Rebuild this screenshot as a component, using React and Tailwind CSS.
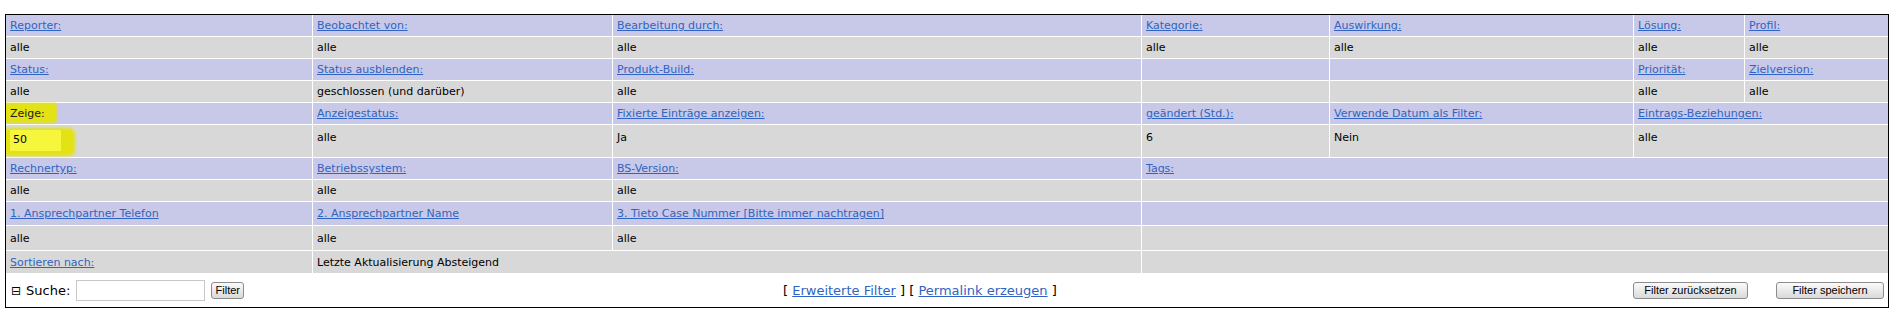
const PURPLE = "bg-[#c8c8e8]";
const GRAY = "bg-[#d8d8d8]";

function L({ children }) {
  return (
    <a href="#" className="text-[#2f64c2] underline">
      {children}
    </a>
  );
}

function Cell({ bg, span = 1, top = false, children }) {
  return (
    <td
      colSpan={span}
      className={`${bg} px-[4px] whitespace-nowrap overflow-hidden ${top ? "align-top pt-[5px]" : "align-middle pt-[2px] pb-0"}`}
    >
      {children}
    </td>
  );
}

function Btn({ children, className = "" }) {
  return (
    <button
      className={`h-[17px] rounded-[3px] border border-[#8c8c8c] bg-gradient-to-b from-[#fbfbfb] to-[#d9d9d9] text-[11px] leading-none text-black font-['Liberation_Sans',Arial,sans-serif] ${className}`}
    >
      {children}
    </button>
  );
}

export default function App() {
  return (
    <div className="min-h-screen bg-white pl-[5px] pt-[14px] font-['DejaVu_Sans',Verdana,sans-serif] text-[11px] text-black">
      <div className="w-[1884px] border border-black overflow-hidden">
        <table className="-m-px w-[1884px] table-fixed border-separate border-spacing-[1px] bg-white">
          <colgroup>
            <col className="w-[306px]" />
            <col className="w-[299px]" />
            <col className="w-[528px]" />
            <col className="w-[187px]" />
            <col className="w-[303px]" />
            <col className="w-[110px]" />
            <col className="w-[143px]" />
          </colgroup>
          <tbody>
            <tr className="h-[21px]">
              <Cell bg={PURPLE}><L>Reporter:</L></Cell>
              <Cell bg={PURPLE}><L>Beobachtet von:</L></Cell>
              <Cell bg={PURPLE}><L>Bearbeitung durch:</L></Cell>
              <Cell bg={PURPLE}><L>Kategorie:</L></Cell>
              <Cell bg={PURPLE}><L>Auswirkung:</L></Cell>
              <Cell bg={PURPLE}><L>Lösung:</L></Cell>
              <Cell bg={PURPLE}><L>Profil:</L></Cell>
            </tr>
            <tr className="h-[21px]">
              <Cell bg={GRAY}>alle</Cell>
              <Cell bg={GRAY}>alle</Cell>
              <Cell bg={GRAY}>alle</Cell>
              <Cell bg={GRAY}>alle</Cell>
              <Cell bg={GRAY}>alle</Cell>
              <Cell bg={GRAY}>alle</Cell>
              <Cell bg={GRAY}>alle</Cell>
            </tr>
            <tr className="h-[21px]">
              <Cell bg={PURPLE}><L>Status:</L></Cell>
              <Cell bg={PURPLE}><L>Status ausblenden:</L></Cell>
              <Cell bg={PURPLE}><L>Produkt-Build:</L></Cell>
              <Cell bg={PURPLE} />
              <Cell bg={PURPLE} />
              <Cell bg={PURPLE}><L>Priorität:</L></Cell>
              <Cell bg={PURPLE}><L>Zielversion:</L></Cell>
            </tr>
            <tr className="h-[21px]">
              <Cell bg={GRAY}>alle</Cell>
              <Cell bg={GRAY}>geschlossen (und darüber)</Cell>
              <Cell bg={GRAY}>alle</Cell>
              <Cell bg={GRAY} />
              <Cell bg={GRAY} />
              <Cell bg={GRAY}>alle</Cell>
              <Cell bg={GRAY}>alle</Cell>
            </tr>
            <tr className="h-[21px]">
              <td className={`${PURPLE} relative px-[4px] pt-[2px] align-middle`}>
                {/* marker highlight drawn over the label */}
                <span className="absolute left-[-3px] top-[0px] h-[20px] w-[54px] rounded-[4px] bg-[#e2e214] blur-[1px]" />
                <span className="relative text-[#1a1a1a]">Zeige:</span>
              </td>
              <Cell bg={PURPLE}><L>Anzeigestatus:</L></Cell>
              <Cell bg={PURPLE}><L>Fixierte Einträge anzeigen:</L></Cell>
              <Cell bg={PURPLE}><L>geändert (Std.):</L></Cell>
              <Cell bg={PURPLE}><L>Verwende Datum als Filter:</L></Cell>
              <Cell bg={PURPLE} span={2}><L>Eintrags-Beziehungen:</L></Cell>
            </tr>
            <tr className="h-[32px]">
              <td className={`${GRAY} relative px-[4px] align-top pt-[5px]`}>
                <span className="absolute left-[-3px] top-[3px] h-[28px] w-[72px] rounded-[6px] bg-[#e2e214] blur-[1.5px]" />
                <div className="relative flex h-[21px] w-[51px] items-center bg-[#f6f63c] pl-[3px] text-[11px]">
                  50
                </div>
              </td>
              <Cell bg={GRAY} top>alle</Cell>
              <Cell bg={GRAY} top>Ja</Cell>
              <Cell bg={GRAY} top>6</Cell>
              <Cell bg={GRAY} top>Nein</Cell>
              <Cell bg={GRAY} span={2} top>alle</Cell>
            </tr>
            <tr className="h-[21px]">
              <Cell bg={PURPLE}><L>Rechnertyp:</L></Cell>
              <Cell bg={PURPLE}><L>Betriebssystem:</L></Cell>
              <Cell bg={PURPLE}><L>BS-Version:</L></Cell>
              <Cell bg={PURPLE} span={4}><L>Tags:</L></Cell>
            </tr>
            <tr className="h-[21px]">
              <Cell bg={GRAY}>alle</Cell>
              <Cell bg={GRAY}>alle</Cell>
              <Cell bg={GRAY}>alle</Cell>
              <Cell bg={GRAY} span={4} />
            </tr>
            <tr className="h-[23px]">
              <Cell bg={PURPLE}><L>1. Ansprechpartner Telefon</L></Cell>
              <Cell bg={PURPLE}><L>2. Ansprechpartner Name</L></Cell>
              <Cell bg={PURPLE}><L>3. Tieto Case Nummer [Bitte immer nachtragen]</L></Cell>
              <Cell bg={PURPLE} span={4} />
            </tr>
            <tr className="h-[24px]">
              <Cell bg={GRAY}>alle</Cell>
              <Cell bg={GRAY}>alle</Cell>
              <Cell bg={GRAY}>alle</Cell>
              <Cell bg={GRAY} span={4} />
            </tr>
            <tr className="h-[22px]">
              <Cell bg={GRAY}><L>Sortieren nach:</L></Cell>
              <Cell bg={GRAY} span={2}>Letzte Aktualisierung Absteigend</Cell>
              <Cell bg={GRAY} span={4} />
            </tr>
            <tr className="h-[33px]">
              <td colSpan={7} className="bg-white p-0 align-middle">
                <div className="flex items-center text-[13px]">
                  <div className="flex w-[777px] items-center pl-[5px]">
                    <span className="text-[12px]">⊟</span>
                    <span className="ml-[5px]">Suche:</span>
                    <input
                      type="text"
                      className="ml-[6px] h-[21px] w-[129px] border border-[#c8c8c8] bg-white px-1 text-[11px] outline-none"
                    />
                    <Btn className="ml-[6px] w-[33px]">Filter</Btn>
                  </div>
                  <div className="whitespace-nowrap">
                    [ <L>Erweiterte Filter</L> ] [ <L>Permalink erzeugen</L> ]
                  </div>
                  <div className="ml-auto flex items-center gap-[28px] pr-[4px]">
                    <Btn className="w-[115px]">Filter zurücksetzen</Btn>
                    <Btn className="w-[108px]">Filter speichern</Btn>
                  </div>
                </div>
              </td>
            </tr>
          </tbody>
        </table>
      </div>
    </div>
  );
}
